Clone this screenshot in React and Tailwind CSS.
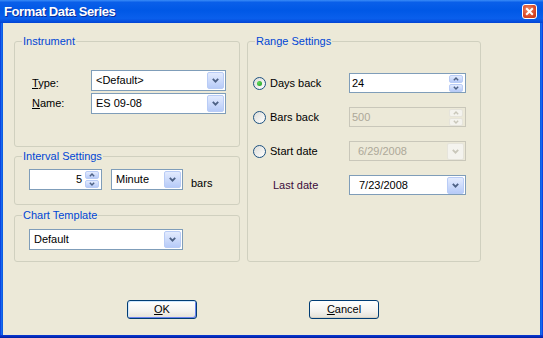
import React from "react";
import clsx from "clsx";

function Chevron({ up, color = "#4D6185", w = 7, h = 5 }) {
  return (
    <svg width={w} height={h} viewBox="0 0 7 5" className="block">
      <path
        d={up ? "M0.8 4.2 L3.5 1.4 L6.2 4.2" : "M0.8 0.8 L3.5 3.6 L6.2 0.8"}
        stroke={color}
        strokeWidth="1.8"
        fill="none"
      />
    </svg>
  );
}

function Combo({ className, text, disabled, textClass = "pl-[4px]" }) {
  return (
    <div
      className={clsx(
        "flex items-center border",
        disabled ? "border-[#C9C7BA] bg-[#ECE9D8] text-[#ACA899]" : "border-[#7F9DB9] bg-white",
        className
      )}
    >
      <span className={clsx("flex-1 leading-[13px] whitespace-nowrap overflow-hidden", textClass)}>{text}</span>
      <div
        className={clsx(
          "w-[17px] h-[17px] mr-[1px] rounded-[2px] border flex items-center justify-center",
          disabled
            ? "border-[#E6E4DB] bg-[#F4F3EE]"
            : "border-[#B9CCF6] bg-[linear-gradient(to_bottom,#e3ebfe,#b7cbf8)]"
        )}
      >
        <Chevron color={disabled ? "#C9C7BA" : "#4D6185"} />
      </div>
    </div>
  );
}

function SpinHalf({ up, disabled }) {
  return (
    <div
      className={clsx(
        "w-[14px] h-[8px] rounded-[2px] border flex items-center justify-center",
        disabled
          ? "border-[#E6E4DB] bg-[#F4F3EE]"
          : "border-[#B9CCF6] bg-[linear-gradient(to_bottom,#e3ebfe,#b7cbf8)]"
      )}
    >
      <Chevron up={up} w={6} h={4} color={disabled ? "#C9C7BA" : "#4D6185"} />
    </div>
  );
}

function Spin({ className, text, right, disabled }) {
  return (
    <div
      className={clsx(
        "flex items-center border",
        disabled ? "border-[#C9C7BA] bg-[#ECE9D8] text-[#ACA899]" : "border-[#7F9DB9] bg-white",
        className
      )}
    >
      <span className={clsx("flex-1 leading-[13px]", right ? "text-right pr-[3px]" : "pl-[2px]")}>{text}</span>
      <div className="flex flex-col gap-[1px] mr-[2px]">
        <SpinHalf up disabled={disabled} />
        <SpinHalf disabled={disabled} />
      </div>
    </div>
  );
}

function Radio({ checked }) {
  return (
    <div className="w-[13px] h-[13px] rounded-full border border-[#1C5180] bg-[linear-gradient(135deg,#dcdcd7,#ffffff)] flex items-center justify-center shrink-0">
      {checked && (
        <div className="w-[5px] h-[5px] rounded-full bg-[radial-gradient(circle_at_35%_35%,#5fd85b,#1f9a1f)]" />
      )}
    </div>
  );
}

function Group({ title, className, children }) {
  return (
    <fieldset className={clsx("border border-[#D0D0BF] rounded-[3px] m-0 p-0 min-w-0", className)}>
      <legend className="ml-[7px] px-[1px] text-[#0046D5] leading-[13px]">{title}</legend>
      {children}
    </fieldset>
  );
}

function XPButton({ children, isDefault }) {
  return (
    <div
      className={clsx(
        "w-[70px] h-[19px] rounded-[3px] border border-[#003C74] flex items-center justify-center leading-[13px] bg-[linear-gradient(to_bottom,#ffffff,#f3f2ee_60%,#e4e1d6)]",
        isDefault
          ? "shadow-[inset_1px_1px_0_0_#cee7ff,inset_-1px_-1px_0_0_#6982ee]"
          : "shadow-[inset_0_-1px_0_0_#d6d0c5]"
      )}
    >
      {children}
    </div>
  );
}

export default function App() {
  return (
    <div className="w-[543px] h-[338px] flex flex-col overflow-hidden font-['Liberation_Sans',Arial,sans-serif] text-[11px] text-black">
      {/* Title bar */}
      <div className="h-[23px] flex items-center justify-between pl-[4px] pr-[6px] bg-[linear-gradient(to_bottom,#3a8cf8_0%,#0a5fe9_10%,#0058e6_45%,#0a5fec_80%,#0550e0_92%,#0343d2_100%)]">
        <span className="text-white font-bold text-[13px] tracking-[-0.4px] [text-shadow:1px_1px_0_#0a2c9a]">
          Format Data Series
        </span>
        <div className="w-[15px] h-[15px] rounded-[3px] border border-white bg-[radial-gradient(circle_at_40%_35%,#f08a63,#d8492a_60%,#c2340f)] flex items-center justify-center">
          <svg width="9" height="9" viewBox="0 0 9 9">
            <path d="M1.2 1.2 L7.8 7.8 M7.8 1.2 L1.2 7.8" stroke="#ffffff" strokeWidth="2" />
          </svg>
        </div>
      </div>

      <div className="flex flex-1 min-h-0">
        <div className="w-[3px] bg-[linear-gradient(to_right,#0831d9,#166aee,#0855dd)]" />
        <div className="flex-1 bg-[#ECE9D8] flex flex-col pt-[12px] pl-[11px]">
          <div className="flex gap-[7px]">
            {/* Left column */}
            <div className="w-[226px] flex flex-col">
              <Group title="Instrument" className="h-[112px]">
                <div className="flex pl-[17px]">
                  <div className="w-[59px] pt-[28px] flex flex-col leading-[14px]">
                    <span>
                      <u className="underline-offset-[1px]">T</u>ype:
                    </span>
                    <span className="mt-[6px]">
                      <u className="underline-offset-[1px]">N</u>ame:
                    </span>
                  </div>
                  <div className="pt-[22px] flex flex-col gap-[2px]">
                    <Combo className="w-[135px] h-[21px]" text="<Default>" />
                    <Combo className="w-[135px] h-[21px]" text="ES 09-08" />
                  </div>
                </div>
              </Group>

              <Group title="Interval Settings" className="h-[55px] mt-[3px]">
                <div className="flex items-start mt-[6px] pl-[14px]">
                  <Spin className="w-[73px] h-[21px]" text="5" right />
                  <Combo className="w-[72px] h-[21px] ml-[9px]" text="Minute" />
                  <span className="ml-[8px] mt-[8px] leading-[13px]">bars</span>
                </div>
              </Group>

              <Group title="Chart Template" className="h-[53px] mt-[4px]">
                <div className="mt-[7px] pl-[14px]">
                  <Combo className="w-[154px] h-[21px]" text="Default" />
                </div>
              </Group>
            </div>

            {/* Right column */}
            <Group title="Range Settings" className="w-[234px] h-[227px]">
              <div className="mt-[25px] flex flex-col gap-[14px]">
                <div className="flex items-center h-[20px]">
                  <div className="w-[101px] flex items-center pl-[5px]">
                    <Radio checked />
                    <span className="ml-[4px] leading-[13px]">Days back</span>
                  </div>
                  <Spin className="w-[117px] h-[20px]" text="24" />
                </div>
                <div className="flex items-center h-[20px]">
                  <div className="w-[101px] flex items-center pl-[5px]">
                    <Radio />
                    <span className="ml-[4px] leading-[13px]">Bars back</span>
                  </div>
                  <Spin className="w-[117px] h-[20px]" text="500" disabled />
                </div>
                <div className="flex items-center h-[20px]">
                  <div className="w-[101px] flex items-center pl-[5px]">
                    <Radio />
                    <span className="ml-[4px] leading-[13px]">Start date</span>
                  </div>
                  <Combo className="w-[117px] h-[20px]" text="6/29/2008" disabled textClass="pl-[8px]" />
                </div>
                <div className="flex items-center h-[20px]">
                  <div className="w-[101px] pl-[25px]">
                    <span className="leading-[13px] text-[#3a0a3a]">Last date</span>
                  </div>
                  <Combo className="w-[117px] h-[20px]" text="7/23/2008" textClass="pl-[9px]" />
                </div>
              </div>
            </Group>
          </div>

          {/* Buttons */}
          <div className="flex mt-[38px] ml-[113px] gap-[112px]">
            <XPButton isDefault>
              <span>
                <u className="underline-offset-[1px]">O</u>K
              </span>
            </XPButton>
            <XPButton>
              <span>
                <u className="underline-offset-[1px]">C</u>ancel
              </span>
            </XPButton>
          </div>
        </div>
        <div className="w-[3px] bg-[linear-gradient(to_right,#0855dd,#166aee,#0831d9)]" />
      </div>
      <div className="h-[3px] bg-[linear-gradient(to_bottom,#0a3ad6,#001ea0)]" />
    </div>
  );
}
